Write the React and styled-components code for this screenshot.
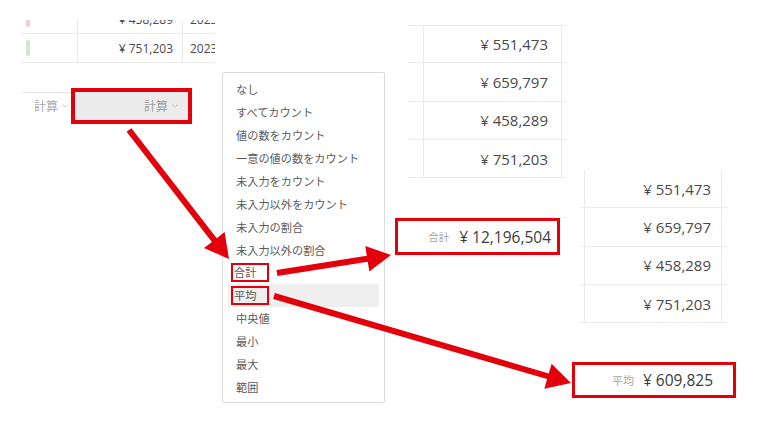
import React from "react";
import styled, { createGlobalStyle } from "styled-components";
import { ChevronDown } from "lucide-react";

const RED = "#e3000b";
const FONT = `"Open Sans", "Noto Sans CJK JP", sans-serif`;

const GlobalStyle = createGlobalStyle`
  html, body { margin: 0; padding: 0; background: #fff; }
  body { font-family: ${FONT}; }
`;

// the collage: every cut-out sits where it was pasted
const Canvas = styled.div`
  position: relative;
  width: 768px;
  height: 432px;
  overflow: hidden;
  background: #fff;
`;

const Clip = styled.div`
  position: absolute;
  left: ${(p) => p.$x}px;
  top: ${(p) => p.$y}px;
  width: ${(p) => p.$w}px;
  display: flex;
  flex-direction: column;
  overflow: hidden;
`;

const Row = styled.div`
  display: grid;
  grid-template-columns: ${(p) => p.$cols};
  height: ${(p) => p.$h || 29}px;
  box-sizing: border-box;
  border-bottom: 1px solid #ebebeb;
  border-top: ${(p) => (p.$top ? "1px solid #ebebeb" : "none")};
  margin-top: ${(p) => p.$shift || 0}px;
  flex-shrink: 0;
`;

const Cell = styled.div`
  display: flex;
  align-items: center;
  justify-content: ${(p) => (p.$right ? "flex-end" : "flex-start")};
  padding: 0 ${(p) => p.$pr || 0}px 0 ${(p) => p.$pl || 0}px;
  border-right: ${(p) => (p.$line ? "1px solid #ebebeb" : "none")};
  font-size: ${(p) => p.$size || 12}px;
  color: #4a4a4a;
  white-space: nowrap;
  overflow: hidden;
  min-width: 0;
`;

const Pill = styled.span`
  width: 4px;
  height: 16px;
  border-radius: 2px;
  margin-left: 4px;
  background: ${(p) => p.$color};
`;

const SummaryRow = styled.div`
  display: flex;
  margin-top: 25px;
  height: 36px;
`;

const CalcCell = styled.div`
  width: 49px;
  height: 26px;
  margin-top: 4px;
  border-top: 1px solid #e6e6e6;
  display: flex;
  align-items: center;
  justify-content: flex-end;
  gap: 2px;
  padding-right: 1px;
  box-sizing: border-box;
  font-size: 12px;
  color: #a8a8a8;
`;

const RedFrame = styled.div`
  width: ${(p) => p.$w}px;
  height: ${(p) => p.$h}px;
  box-sizing: border-box;
  border: ${(p) => p.$b || 3}px solid ${RED};
  padding: ${(p) => p.$pad || 0}px;
  display: flex;
  align-items: center;
  justify-content: flex-end;
  gap: ${(p) => p.$gap || 8}px;
  padding-right: ${(p) => p.$pr || 0}px;
`;

const CalcButton = styled.div`
  flex: 1;
  align-self: stretch;
  background: #ececec;
  display: flex;
  align-items: center;
  justify-content: flex-end;
  gap: 2px;
  padding-right: 8px;
  font-size: 12px;
  color: #9e9e9e;
`;

const Menu = styled.div`
  position: absolute;
  left: 222px;
  top: 72px;
  width: 163px;
  height: 331px;
  box-sizing: border-box;
  border: 1px solid #dadada;
  border-radius: 2px;
  background: #fff;
  padding-top: 5px;
  display: flex;
  flex-direction: column;
`;

const MenuItem = styled.div`
  height: 22.9px;
  margin: 0 5px;
  padding: 0 8px;
  display: flex;
  align-items: center;
  font-size: 11.2px;
  color: #5a5a5a;
  background: ${(p) => (p.$active ? "#efefef" : "transparent")};
  white-space: nowrap;
`;

const Mark = styled.span`
  display: inline-block;
  border: 2.5px solid ${RED};
  padding: 0 11px 0 1px;
  margin-left: -5px;
  line-height: 15px;
`;

const SumLabel = styled.span`
  font-size: ${(p) => p.$size || 10.5}px;
  color: #a3a3a3;
`;

const SumValue = styled.span`
  font-size: 15.5px;
  color: #3c3c3c;
`;

const SumLine = styled.div`
  border-top: 1px solid #efefef;
`;

const Overlay = styled.svg`
  position: absolute;
  left: 0;
  top: 0;
  pointer-events: none;
`;

const menuItems = [
  "なし",
  "すべてカウント",
  "値の数をカウント",
  "一意の値の数をカウント",
  "未入力をカウント",
  "未入力以外をカウント",
  "未入力の割合",
  "未入力以外の割合",
  "合計",
  "平均",
  "中央値",
  "最小",
  "最大",
  "範囲",
];

const values = ["¥ 551,473", "¥ 659,797", "¥ 458,289", "¥ 751,203"];

function arrowPoints(x1, y1, x2, y2, w = 6, hl = 24, hw = 13) {
  const dx = x2 - x1;
  const dy = y2 - y1;
  const len = Math.hypot(dx, dy);
  const ux = dx / len;
  const uy = dy / len;
  const nx = -uy;
  const ny = ux;
  const bx = x2 - ux * hl;
  const by = y2 - uy * hl;
  const pts = [
    [x1 + (nx * w) / 2, y1 + (ny * w) / 2],
    [bx + (nx * w) / 2, by + (ny * w) / 2],
    [bx + nx * hw, by + ny * hw],
    [x2, y2],
    [bx - nx * hw, by - ny * hw],
    [bx - (nx * w) / 2, by - (ny * w) / 2],
    [x1 - (nx * w) / 2, y1 - (ny * w) / 2],
  ];
  return pts.map((p) => p.map((v) => v.toFixed(1)).join(",")).join(" ");
}

const arrows = [
  [129, 130, 229, 259],
  [277, 273, 391, 255],
  [274, 296, 571, 383],
];

const App = () => {
  return (
    <>
      <GlobalStyle />
      <Canvas>
        {/* cut-out 1: bottom of the sales table, top row sliced off */}
        <Clip $x={22} $y={20} $w={193}>
          <Row $cols="56px 105px 1fr" $shift={-15}>
            <Cell $line>
              <Pill $color="#f7cdca" />
            </Cell>
            <Cell $line $right $pr={9}>
              ¥ 458,289
            </Cell>
            <Cell $pl={7}>2023/04/30</Cell>
          </Row>
          <Row $cols="56px 105px 1fr">
            <Cell $line>
              <Pill $color="#cfe6cf" />
            </Cell>
            <Cell $line $right $pr={9}>
              ¥ 751,203
            </Cell>
            <Cell $pl={7}>2023/05/31</Cell>
          </Row>
          <SummaryRow>
            <CalcCell>
              計算 <ChevronDown size={10} strokeWidth={1.5} />
            </CalcCell>
            <RedFrame $w={121} $h={36} $b={4} $pad={0}>
              <CalcButton>
                計算 <ChevronDown size={10} strokeWidth={1.5} />
              </CalcButton>
            </RedFrame>
          </SummaryRow>
        </Clip>

        {/* cut-out 2: calculation menu */}
        <Menu>
          {menuItems.map((label) => {
            const marked = label === "合計" || label === "平均";
            return (
              <MenuItem key={label} $active={label === "平均"}>
                {marked ? <Mark>{label}</Mark> : label}
              </MenuItem>
            );
          })}
        </Menu>

        {/* cut-out 3: price column with total */}
        <Clip $x={408} $y={25} $w={158}>
          {values.map((v, i) => (
            <Row key={v} $cols="16px 138px 1fr" $h={38.3} $top={i === 0}>
              <Cell $line />
              <Cell $line $right $pr={13} $size={15}>
                {v}
              </Cell>
              <Cell />
            </Row>
          ))}
        </Clip>
        <Clip $x={395} $y={217} $w={172}>
          <SumLine>
            <RedFrame $w={165} $h={37} $pr={6} $gap={10}>
              <SumLabel>合計</SumLabel>
              <SumValue>¥ 12,196,504</SumValue>
            </RedFrame>
          </SumLine>
        </Clip>

        {/* cut-out 4: price column again */}
        <Clip $x={580} $y={170} $w={148}>
          {values.map((v) => (
            <Row key={v} $cols="5px 137px 1fr" $h={38.3}>
              <Cell $line />
              <Cell $line $right $pr={10} $size={15}>
                {v}
              </Cell>
              <Cell />
            </Row>
          ))}
        </Clip>

        {/* cut-out 5: average */}
        <Clip $x={572} $y={362} $w={166}>
          <RedFrame $w={164} $h={36} $pr={20} $gap={9}>
            <SumLabel $size={11}>平均</SumLabel>
            <SumValue>¥ 609,825</SumValue>
          </RedFrame>
        </Clip>

        <Overlay width="768" height="432" viewBox="0 0 768 432">
          {arrows.map((a, i) => (
            <polygon key={i} points={arrowPoints(...a)} fill={RED} />
          ))}
        </Overlay>
      </Canvas>
    </>
  );
};

export default App;
